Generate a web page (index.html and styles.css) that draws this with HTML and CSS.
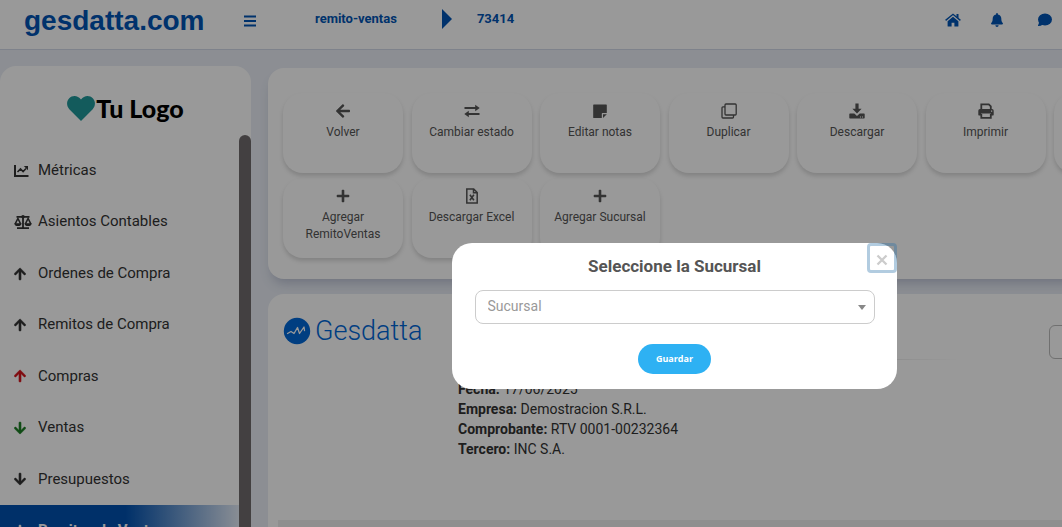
FILE: index.html
```html
<!DOCTYPE html>
<html lang="es">
<head>
<meta charset="utf-8">
<meta name="viewport" content="width=device-width, initial-scale=1">
<title>gesdatta.com</title>
<link rel="stylesheet" href="styles.css">
</head>
<body>
<svg class="sprite" aria-hidden="true">
  <symbol id="arrow" viewBox="0 0 448 512"><path d="M34.900 289.500l-22.200-22.200c-9.400-9.400-9.400-24.600 0-33.900L207 39c9.400-9.400 24.600-9.400 33.900 0l194.300 194.300c9.400 9.400 9.400 24.600 0 33.900L413 289.400c-9.500 9.500-25 9.300-34.300-.4L264 168.600V456c0 13.300-10.700 24-24 24h-32c-13.300 0-24-10.700-24-24V168.600L69.200 289.100c-9.300 9.800-24.800 10-34.300.4z"/></symbol>
  <symbol id="plus" viewBox="0 0 16 16"><path d="M6.700 2.500q0-.8.800-.8h1q.8 0 .8.800v4.200h4.200q.8 0 .8.800v1q0 .8-.8.800H9.300v4.200q0 .8-.8.800h-1q-.8 0-.8-.8V9.300H2.500q-.8 0-.8-.8v-1q0-.8.8-.8h4.200z"/></symbol>
</svg>

<header class="topbar">
  <a class="brand" href="#">gesdatta.com</a>
  <button class="icon-button menu-toggle" aria-label="Menú">
    <svg width="14" height="14" viewBox="0 0 14 14"><path d="M1 2.500h12M1 7h12M1 11.500h12" fill="none" stroke="currentColor" stroke-width="2"/></svg>
  </button>
  <nav class="crumbs" aria-label="Ruta">
    <a href="#">remito-ventas</a>
    <span class="crumb-arrow"></span>
    <a href="#">73414</a>
  </nav>
  <div class="tools">
    <a href="#" aria-label="Inicio"><svg width="16" height="14" viewBox="0 0 16 14"><path d="M8 3.700 2.600 8.200V13q0 .5.500.5h3.500V9.800h2.800v3.700h3.500q.5 0 .5-.5V8.200z"/><path d="M.6 7.400 8 1.300l7.400 6.100" fill="none" stroke="currentColor" stroke-width="1.400"/><path d="M11.500 1h2v4.500l-2-1.700z"/></svg></a>
    <a href="#" aria-label="Notificaciones"><svg width="14" height="14" viewBox="0 0 14 14"><path d="M7 0q.9 0 .9 1v.4c2.300.4 3.400 2.200 3.400 4.200 0 2.900.7 3.700 1.400 4.400.6.700.2 1.500-.7 1.500H2c-.9 0-1.300-.8-.7-1.500.7-.7 1.400-1.500 1.400-4.400 0-2 1.100-3.800 3.400-4.200V1q0-1 .9-1zM5.300 12.300h3.400q-.2 1.700-1.700 1.700t-1.700-1.700z"/></svg></a>
    <a href="#" aria-label="Mensajes"><svg width="14" height="14" viewBox="0 0 14 14"><ellipse cx="7" cy="6.500" rx="7" ry="5.900"/><path d="M1 9q0 2-1 3.300-.2.600.4.700 2.600 0 4.400-1.500z"/></svg></a>
  </div>
</header>

<div class="layout">
  <aside class="sidebar">
    <div class="company-logo">
      <svg width="28" height="25" viewBox="0 0 28 25"><path d="M14 25 2.300 13.200C-.7 10-.6 5 2.200 2.200 5.500-1 11-.7 14 3.600 17-.7 22.500-1 25.800 2.200 28.600 5 28.700 10 25.700 13.200z"/></svg>
      <span>Tu Logo</span>
    </div>
    <nav>
      <ul class="menu">
        <li><a href="#"><svg width="16" height="14" viewBox="0 0 16 14"><path d="M1 1v11h13.500" fill="none" stroke="currentColor" stroke-width="2"/><path d="m3.500 8 3-3 2.600 2.600L12 4.500" fill="none" stroke="currentColor" stroke-width="1.600"/><path d="M9.800 2H14v4.200z"/></svg>Métricas</a></li>
        <li><a href="#"><svg width="18" height="14" viewBox="0 0 18 14"><path d="M2.500 1.800h13M9 1v12M3 13.200h12" fill="none" stroke="currentColor" stroke-width="1.800"/><circle cx="9" cy="1.800" r="1.800"/><path d="m1.200 8.800 2.700-5.300 2.700 5.300M11.400 8.800l2.700-5.300 2.700 5.300" fill="none" stroke="currentColor" stroke-width="1.500"/><path d="M.2 8.200h7.400q-.4 2.900-3.700 2.900T.2 8.200zM10.400 8.200h7.400q-.4 2.900-3.700 2.900t-3.700-2.900z"/></svg>Asientos Contables</a></li>
        <li><a href="#"><svg class="arrow"><use href="#arrow"/></svg>Ordenes de Compra</a></li>
        <li><a href="#"><svg class="arrow"><use href="#arrow"/></svg>Remitos de Compra</a></li>
        <li><a href="#"><svg class="arrow red"><use href="#arrow"/></svg>Compras</a></li>
        <li><a href="#"><svg class="arrow down green"><use href="#arrow"/></svg>Ventas</a></li>
        <li><a href="#"><svg class="arrow down"><use href="#arrow"/></svg>Presupuestos</a></li>
        <li><a class="active" href="#"><svg class="arrow down"><use href="#arrow"/></svg>Remitos de Ventas</a></li>
      </ul>
    </nav>
    <div class="scroll-thumb"></div>
  </aside>

  <main class="content">
    <section class="panel actions">
      <button class="action"><svg class="left" width="14" height="16"><use href="#arrow"/></svg>Volver</button>
      <button class="action"><svg width="16" height="16" viewBox="0 0 16 16"><path d="M.5 5h12M3.500 11h12" fill="none" stroke="currentColor" stroke-width="1.900"/><path d="m11.200 1.800 4.500 3.200-4.500 3.200zM4.800 7.800.3 11l4.500 3.200z"/></svg>Cambiar estado</button>
      <button class="action"><svg width="16" height="16" viewBox="0 0 16 16"><path d="M1.800 1.500h12.400q.6 0 .6.600V10h-4.300q-.7 0-.7.700V15h-8q-.6 0-.6-.6V2.100q0-.6.600-.6z"/><path d="M11 11.200h3.800L11 15z"/></svg>Editar notas</button>
      <button class="action"><svg width="16" height="16" viewBox="0 0 16 16"><g fill="none" stroke="currentColor" stroke-width="1.300"><rect x="4" y="1" width="11.200" height="11" rx="1"/><path d="M4 3.800H2q-1 0-1 1V14q0 1 1 1h9.500q1 0 1-1v-2"/></g></svg>Duplicar</button>
      <button class="action"><svg width="16" height="16" viewBox="0 0 16 16"><path d="M6.400.5h3.200v5.300h3L8 10.600 3.400 5.800h3z"/><path fill-rule="evenodd" d="M1 10.500h4.300L8 13l2.700-2.500H15q.7 0 .7.700v3.500q0 .8-.7.800H1q-.7 0-.7-.8v-3.500q0-.7.700-.7zm10 3v1h1v-1zm2 0v1h1v-1z"/></svg>Descargar</button>
      <button class="action"><svg width="16" height="16" viewBox="0 0 16 16"><path d="M3.300 6.500V1.300h7.500l2 2v3.200M3.300 11v3.800h9.500V11" fill="none" stroke="currentColor" stroke-width="1.800"/><path fill-rule="evenodd" d="M2 6h12q1.700 0 1.700 1.700v4.100q0 .6-.6.600h-2.300v-2H3.200v2H.9q-.6 0-.6-.6V7.700Q.3 6 2 6zm11 1.500v1.200h1.200V7.500z"/></svg>Imprimir</button>
      <button class="action" aria-label="Más"></button>
      <button class="action"><svg width="16" height="16"><use href="#plus"/></svg>Agregar RemitoVentas</button>
      <button class="action"><svg width="16" height="16" viewBox="0 0 16 16"><path d="M2.800 1h6.900l3.500 3.500V15H2.800zM9.500 1v3.700h3.700" fill="none" stroke="currentColor" stroke-width="1.500"/><path d="m5.900 6.800 4 5.400M9.900 6.800l-4 5.400" stroke="currentColor" stroke-width="1.600"/></svg>Descargar Excel</button>
      <button class="action"><svg width="16" height="16"><use href="#plus"/></svg>Agregar Sucursal</button>
    </section>

    <section class="panel document">
      <div class="document-head">
        <div class="vendor-logo">
          <svg width="28" height="28" viewBox="0 0 28 28"><circle cx="14" cy="14" r="13.200"/><path d="m4.500 16.500 3.500-2 3 2 3.500-6 2 6 4.500-6.500.5 3.500" fill="none" stroke="#fff" stroke-width="1.300" stroke-linejoin="round" stroke-linecap="round"/></svg>
          <span>Gesdatta</span>
        </div>
        <div class="details">
          <hr>
          <p><b>Fecha:</b> 17/06/2025</p>
          <p><b>Empresa:</b> Demostracion S.R.L.</p>
          <p><b>Comprobante:</b> RTV 0001-00232364</p>
          <p><b>Tercero:</b> INC S.A.</p>
        </div>
        <select class="format" aria-label="Formato"><option></option></select>
      </div>
      <div class="table-head"></div>
    </section>
  </main>
</div>

<div class="overlay">
  <form class="modal" role="dialog" aria-labelledby="modal-title">
    <button class="close" type="button" aria-label="Cerrar"><svg width="12" height="12" viewBox="0 0 12 12"><path d="m1.500 1.500 9 9m0-9-9 9" stroke="currentColor" stroke-width="2.300"/></svg></button>
    <h2 id="modal-title">Seleccione la Sucursal</h2>
    <div class="branch-field">
      <select class="branch" aria-labelledby="modal-title"><option>Sucursal</option></select>
      <span class="caret"></span>
    </div>
    <button class="save" type="button">Guardar</button>
  </form>
</div>
</body>
</html>
```
FILE: styles.css
```css
* { box-sizing: border-box; }

body {
  margin: 0;
  height: 100vh;
  overflow: hidden;
  display: flex;
  flex-direction: column;
  background: #e9edf5;
  color: #333;
  font: 14px/20px Roboto, sans-serif;
}

a { color: inherit; text-decoration: none; }
button { font: inherit; color: inherit; border: 0; background: none; padding: 0; }
svg { fill: currentColor; flex: none; display: block; }
.sprite { position: absolute; width: 0; height: 0; }

.topbar {
  flex: none;
  display: flex;
  align-items: center;
  height: 50px;
  padding: 0 10px 10px 24px;
  background: #fff;
  border-bottom: 1px solid #d3d9e8;
  color: #0054b4;
}
.brand { width: 219px; padding-top: 2px; font: bold 28px/32px "Liberation Sans", Arial, sans-serif; }
.menu-toggle { width: 14px; padding-top: 2px; }
.crumbs {
  display: flex;
  align-items: center;
  gap: 25px;
  margin-left: 58px;
  padding-bottom: 2px;
  font-size: 13px;
  font-weight: 700;
}
.crumb-arrow {
  margin-left: 20px;
  border: solid transparent;
  border-width: 10px 0 10px 10px;
  border-left-color: currentColor;
}
.tools { display: flex; gap: 29px; margin-left: auto; }
.tools a:last-child { margin-left: 5px; }

.layout { flex: 1; min-height: 0; display: flex; gap: 17px; }

.sidebar {
  position: relative;
  flex: none;
  width: 251px;
  margin-top: 16px;
  background: #fff;
  border-radius: 16px 16px 0 0;
  overflow: hidden;
}
.company-logo {
  display: flex;
  align-items: center;
  justify-content: center;
  gap: 1px;
  height: 79px;
  padding-top: 5px;
  color: #000;
  font: 900 25px/30px Lato, sans-serif;
}
.company-logo svg { color: #20989a; }
.menu { list-style: none; margin: 0; padding: 0; font-size: 15px; line-height: 1.43; }
.menu a { display: flex; align-items: center; padding: 15px 14px; }
.menu svg { margin-right: 8px; }
.menu svg[width="18"] { margin-right: 6px; }
.menu .arrow { width: 12px; height: 14px; margin-right: 12px; stroke: currentColor; stroke-width: 16px; }
.menu .down { transform: rotate(180deg); }
.menu .red { color: #d5151d; }
.menu .green { color: #1c7d24; }
.menu .active {
  color: #fff;
  font-weight: 700;
  background: linear-gradient(90deg, #0051b0 50%, #e3ebf7 95%);
}
.scroll-thumb {
  position: absolute;
  top: 69px;
  right: 0;
  bottom: 0;
  width: 12px;
  border-radius: 6px 6px 0 0;
  background: #706c6d;
}

.content {
  flex: 1 0 921px;
  display: flex;
  flex-direction: column;
  gap: 15px;
  padding-top: 18px;
}
.panel { background: #fff; border-radius: 16px; }
.actions {
  display: grid;
  grid-template-columns: repeat(7, 120px);
  justify-content: space-between;
  gap: 5px;
  padding: 25px 15px 21px;
  box-shadow: 0 8px 12px -4px #b9bfd2;
}
.action {
  display: flex;
  flex-direction: column;
  align-items: center;
  gap: 5px;
  height: 80px;
  padding: 10px 12px 0;
  border-radius: 20px;
  box-shadow: 0 3px 4px #00000026;
  color: #555;
  font-size: 12px;
  line-height: 17px;
}
.left { transform: rotate(-90deg); }

.document {
  flex: 1;
  display: flex;
  flex-direction: column;
  padding: 17px 10px 0;
  border-radius: 16px 16px 0 0;
}
.document-head { display: flex; height: 209px; }
.vendor-logo {
  display: flex;
  gap: 4px;
  width: 180px;
  height: 40px;
  padding-left: 5px;
  align-items: center;
  color: #0068d8;
  font-size: 27px;
  font-weight: 300;
}
.details { width: 501px; padding-top: 48px; }
.details p { margin: 0; }
hr {
  height: 1px;
  margin: 0 0 19px;
  border: 0;
  background: linear-gradient(90deg, #fff0, #bbb, #fff0);
}
.format {
  width: 110px;
  height: 34px;
  margin: 14px 0 0 90px;
  border: 1px solid #bbb;
  border-radius: 6px;
  background: #fff;
}
.table-head { flex: 1; background: #efefef; }

.overlay {
  position: fixed;
  inset: 0;
  display: flex;
  justify-content: center;
  align-items: flex-start;
  padding: 243px 0 0 287px;
  background: #0006;
}
.modal {
  position: relative;
  display: flex;
  flex-direction: column;
  align-items: center;
  width: 445px;
  padding: 12px 22px 15px;
  border-radius: 20px;
  background: #fff;
}
.close {
  position: absolute;
  top: 0;
  right: 0;
  display: grid;
  place-items: center;
  width: 30px;
  height: 30px;
  padding-top: 4px;
  border: 3px solid #226ca759;
  border-radius: 4px;
  color: #ccc;
}
.modal h2 { margin: 0 0 13px; color: #555; font-size: 17px; line-height: 22px; }
.branch-field { position: relative; width: 100%; max-width: 400px; }
.branch {
  appearance: none;
  display: block;
  width: 100%;
  height: 34px;
  padding: 0 12px 2px;
  border: 1px solid #ccc;
  border-radius: 8px;
  background: #fff;
  color: #999;
  font: inherit;
}
.caret {
  position: absolute;
  top: 15px;
  right: 9px;
  border: solid transparent;
  border-width: 5px 4px 0;
  border-top-color: #888;
  pointer-events: none;
}
.save {
  width: 73px;
  height: 30px;
  margin-top: 20px;
  border-radius: 15px;
  background: #2eb1f3;
  color: #fff;
  font: 700 9px/14px "Open Sans", sans-serif;
}
```
